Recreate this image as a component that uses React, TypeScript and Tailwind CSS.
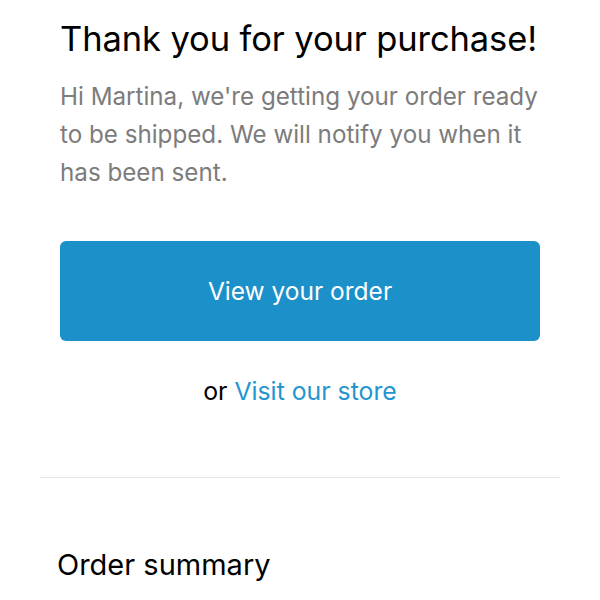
export default function App() {
  return (
    <div className="w-[600px] h-[600px] overflow-hidden bg-white" style={{ fontFamily: 'Inter, "Noto Sans", sans-serif' }}>
      <div className="px-[60px] pt-[18px]">
        <h1 className="text-[34.5px] leading-[42px] text-black tracking-[-0.1px]">Thank you for your purchase!</h1>
        <p className="mt-[18px] text-[24.2px] leading-[38px] text-[#7c7c7c] whitespace-nowrap">
          Hi Martina, we're getting your order ready
          <br />
          to be shipped. We will notify you when it
          <br />
          has been sent.
        </p>
        <button className="mt-[49px] w-full h-[100px] rounded-[6px] bg-[#1b90c9] text-white text-[24.5px]">
          View your order
        </button>
        <p className="mt-[34px] text-center text-[24.8px] leading-[32px] text-black">
          or <a className="text-[#2395cf]">Visit our store</a>
        </p>
      </div>
      <div className="mx-[40px] mt-[70px] border-t border-[#e6e6e6]" />
      <h2 className="px-[57px] mt-[67px] text-[29px] leading-[40px] text-black">Order summary</h2>
    </div>
  );
}
